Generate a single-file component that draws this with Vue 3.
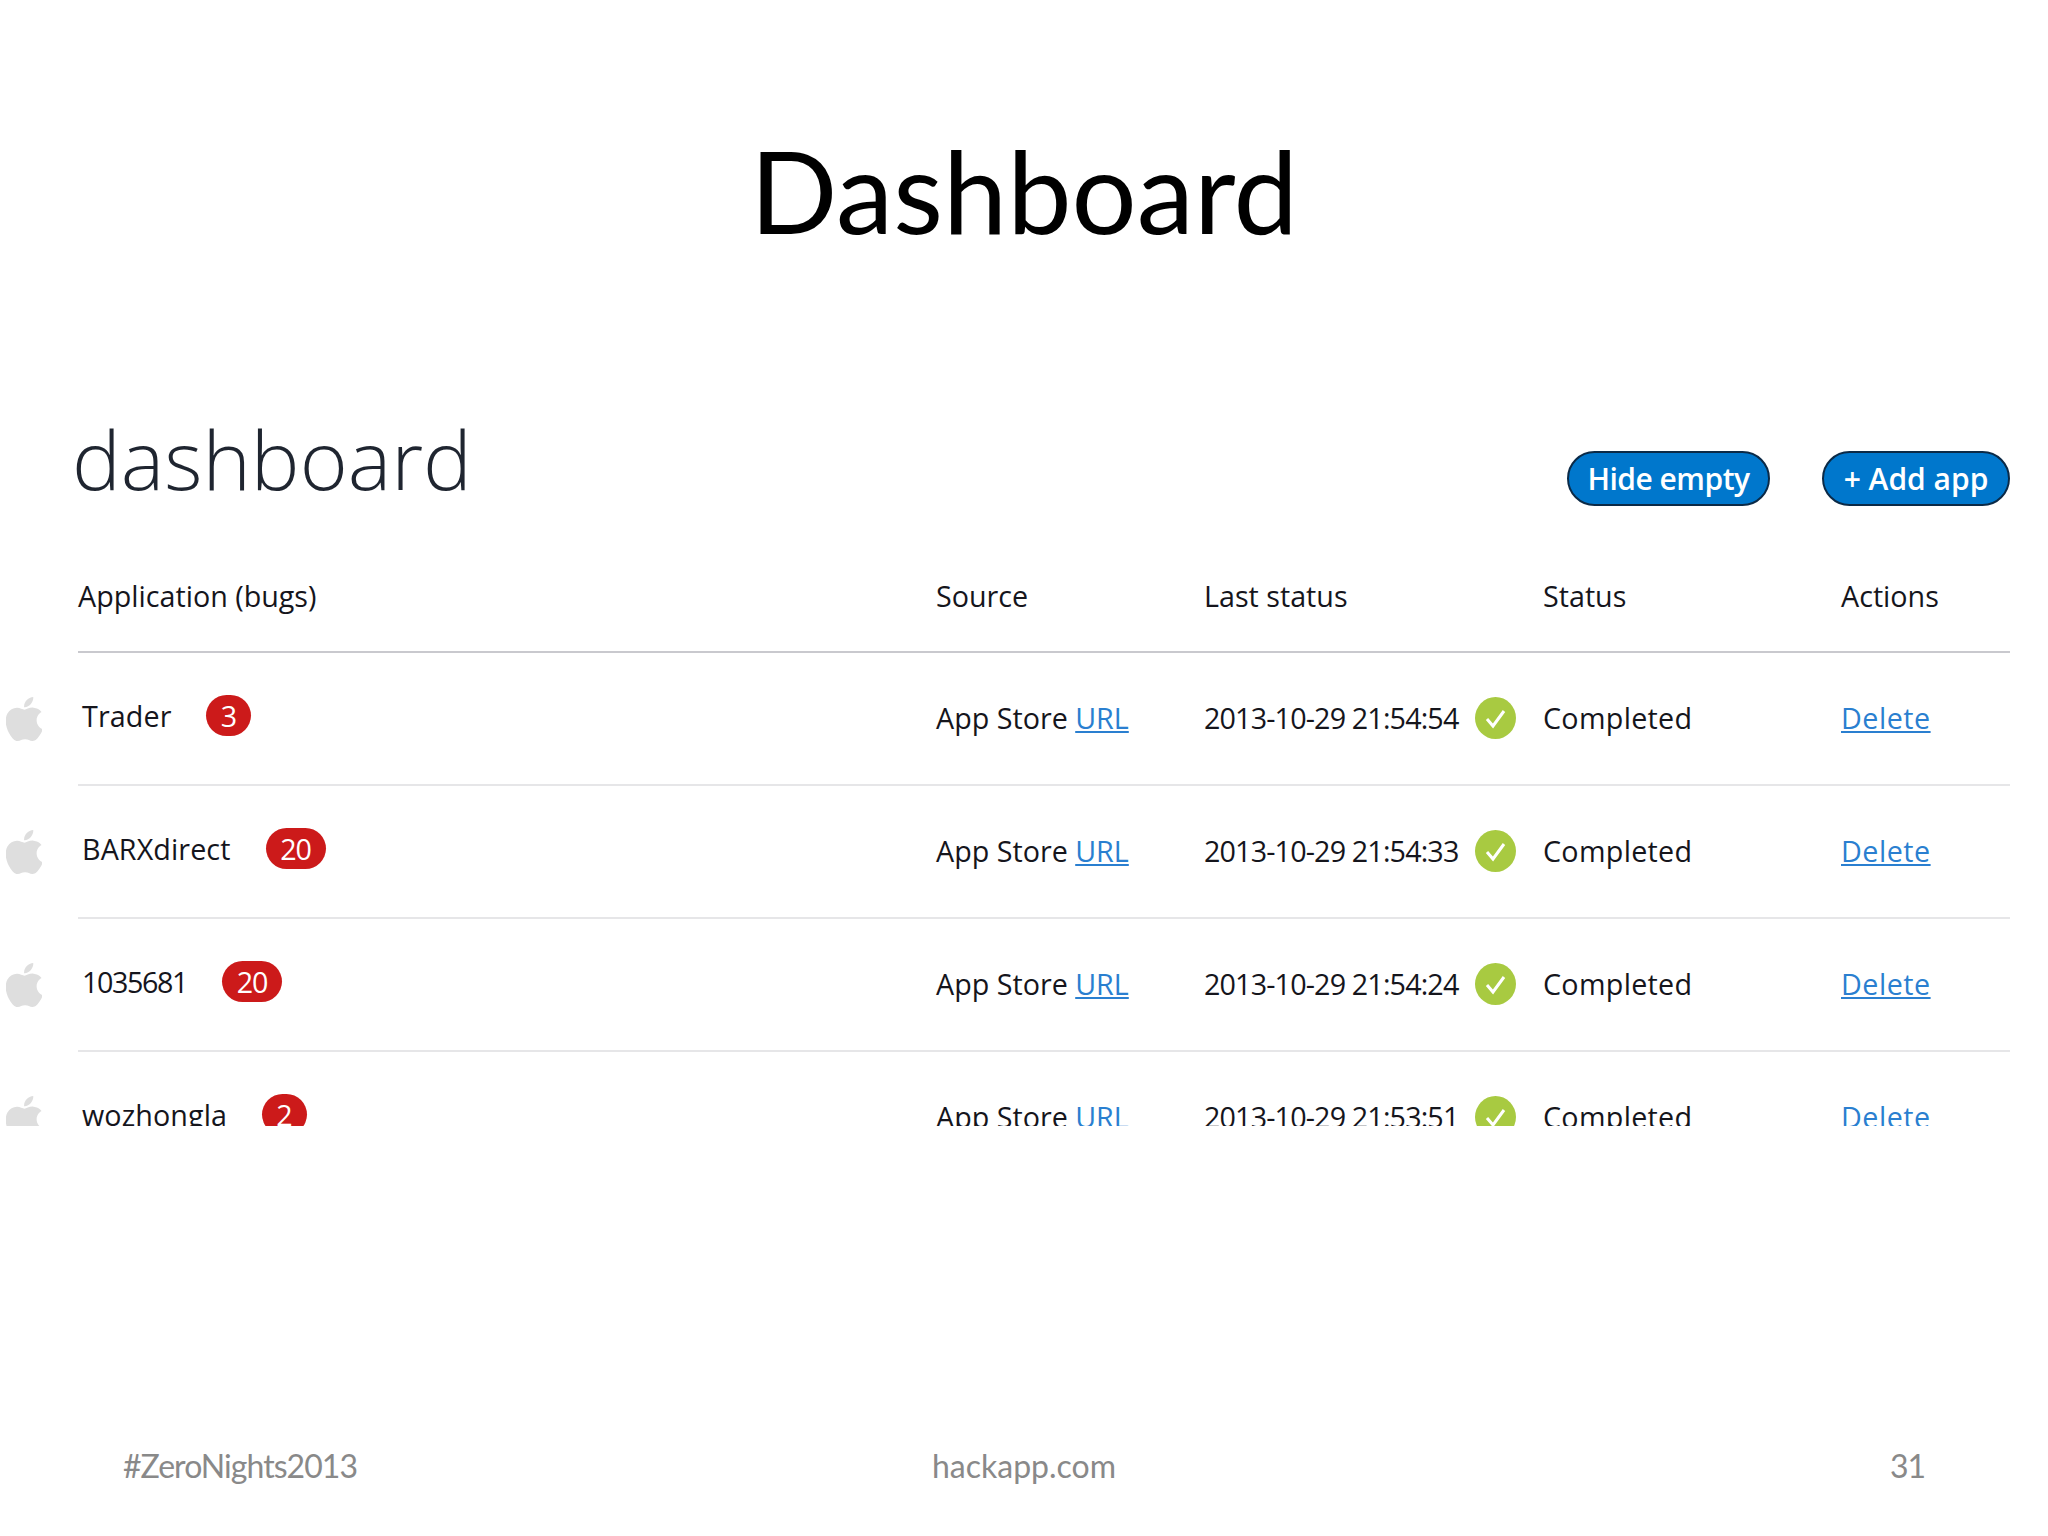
<script setup>
const rows = [
  { name: 'Trader', bugs: 3, time: '2013-10-29 21:54:54' },
  { name: 'BARXdirect', bugs: 20, time: '2013-10-29 21:54:33' },
  { name: '1035681', bugs: 20, time: '2013-10-29 21:54:24' },
  { name: 'wozhongla', bugs: 2, time: '2013-10-29 21:53:51' },
]
const apple = 'M12.152 6.896c-.948 0-2.415-1.078-3.96-1.04-2.04.027-3.91 1.183-4.961 3.014-2.117 3.675-.546 9.103 1.519 12.09 1.013 1.454 2.208 3.09 3.792 3.039 1.52-.065 2.09-.987 3.935-.987 1.831 0 2.35.987 3.96.948 1.637-.026 2.676-1.48 3.676-2.948 1.156-1.688 1.636-3.325 1.662-3.415-.039-.013-3.182-1.221-3.22-4.857-.026-3.04 2.48-4.494 2.597-4.559-1.429-2.09-3.623-2.324-4.39-2.376-2-.156-3.675 1.09-4.61 1.09zM15.53 3.83c.843-1.012 1.4-2.427 1.245-3.83-1.207.052-2.662.805-3.532 1.818-.78.896-1.454 2.338-1.273 3.714 1.338.104 2.715-.688 3.559-1.701'
</script>

<template>
  <div class="slide">
    <h1 class="title">Dashboard</h1>

    <div class="shot">
      <div class="top">
        <div class="heading">dashboard</div>
        <div class="buttons">
          <button class="btn hide">Hide empty</button>
          <button class="btn add">+ Add app</button>
        </div>
      </div>

      <div class="head cols">
        <div>Application (bugs)</div>
        <div>Source</div>
        <div>Last status</div>
        <div>Status</div>
        <div>Actions</div>
      </div>

      <div v-for="row in rows" :key="row.name" class="row">
        <div class="os">
          <svg class="apple" width="36" height="44" viewBox="2.4 0 19 24" preserveAspectRatio="none">
            <path :d="apple" fill="#dedede" />
          </svg>
        </div>
        <div class="cols cells">
          <div class="app">
            <span class="name" :class="{ digits: /^\d+$/.test(row.name) }">{{ row.name }}</span>
            <span class="badge" :class="{ wide: row.bugs > 9 }">{{ row.bugs }}</span>
          </div>
          <div>App Store <a class="link">URL</a></div>
          <div class="last">
            <span class="time">{{ row.time }}</span>
            <svg class="ok" width="41" height="42" viewBox="0 0 41 42">
              <ellipse cx="20.5" cy="21" rx="20.5" ry="21" fill="#a8ca41" />
              <path d="M12 22l6 7 11-15" fill="none" stroke="#fff" stroke-width="3" />
            </svg>
          </div>
          <div class="status">Completed</div>
          <div><a class="link del">Delete</a></div>
        </div>
      </div>
    </div>

    <div class="footer">
      <span class="tag">#ZeroNights2013</span>
      <span class="mid">hackapp.com</span>
      <span class="num">31</span>
    </div>
  </div>
</template>

<style scoped>
.slide {
  width: 2048px;
  height: 1536px;
  overflow: hidden;
  background: #fff;
  display: flex;
  flex-direction: column;
  font-family: "Open Sans", sans-serif;
  color: #15151c;
}

.title {
  margin: 116px 0 0;
  height: 146px;
  font: 400 115px/146px Lato, sans-serif;
  color: #000;
  text-align: center;
}

.shot {
  margin-top: 136px;
  height: 728px;
  overflow: hidden;
  font-size: 28.7px;
}

.top {
  display: flex;
  justify-content: space-between;
  height: 169px;
  padding: 0 38px 0 72px;
}

.heading {
  font-size: 82px;
  font-weight: 300;
  line-height: 120px;
  color: #1f2530;
}

.buttons {
  display: flex;
  gap: 52px;
  padding-top: 53px;
}

.btn {
  height: 55px;
  border: 2px solid #0b2a47;
  border-radius: 28px;
  background: #0077cc;
  color: #fff;
  font: 600 30px/1 "Open Sans", sans-serif;
  letter-spacing: -0.5px;
  padding: 0;
}

.hide { width: 203px; }
.add { width: 188px; letter-spacing: 0; }

.cols {
  display: grid;
  grid-template-columns: 858px 268px 339px 298px 169px;
  width: 1932px;
}

.head {
  box-sizing: border-box;
  margin-left: 78px;
  height: 86px;
  border-bottom: 2px solid #c9c9ce;
  line-height: 58px;
}

.row {
  display: flex;
  height: 133px;
}

.os {
  width: 78px;
  padding: 44px 0 0 6px;
  box-sizing: border-box;
}

.apple {
  filter: blur(0.6px);
}

.cells {
  align-items: center;
  box-sizing: border-box;
  padding-bottom: 2px;
  border-bottom: 2px solid #e6e6e8;
}

.app {
  display: flex;
  align-items: center;
  padding-left: 4px;
  margin-top: -4px;
}

.name {
  letter-spacing: 0.1px;
}

.name.digits {
  letter-spacing: -1.4px;
}

.badge {
  margin-left: 35px;
  width: 45px;
  height: 41px;
  box-sizing: border-box;
  border-radius: 21px;
  background: #cc1a1a;
  color: #fff;
  text-align: center;
  line-height: 41px;
}

.wide {
  width: 60px;
  letter-spacing: -1px;
}

.link {
  color: #2a7fd0;
  text-decoration: underline;
}

.status {
  letter-spacing: 0.3px;
}

.del {
  letter-spacing: 0.5px;
}

.last {
  display: flex;
  align-items: center;
  gap: 17px;
}

.time {
  width: 254px;
  white-space: nowrap;
  letter-spacing: -0.85px;
}

.footer {
  margin-top: auto;
  height: 98px;
  display: grid;
  grid-template-columns: 1fr 1fr 1fr;
  padding: 0 123px;
  font: 400 32px/56px Lato, sans-serif;
  color: #898989;
}

.tag { letter-spacing: -0.95px; }
.mid { text-align: center; }
.num { text-align: right; letter-spacing: -1px; }
</style>
